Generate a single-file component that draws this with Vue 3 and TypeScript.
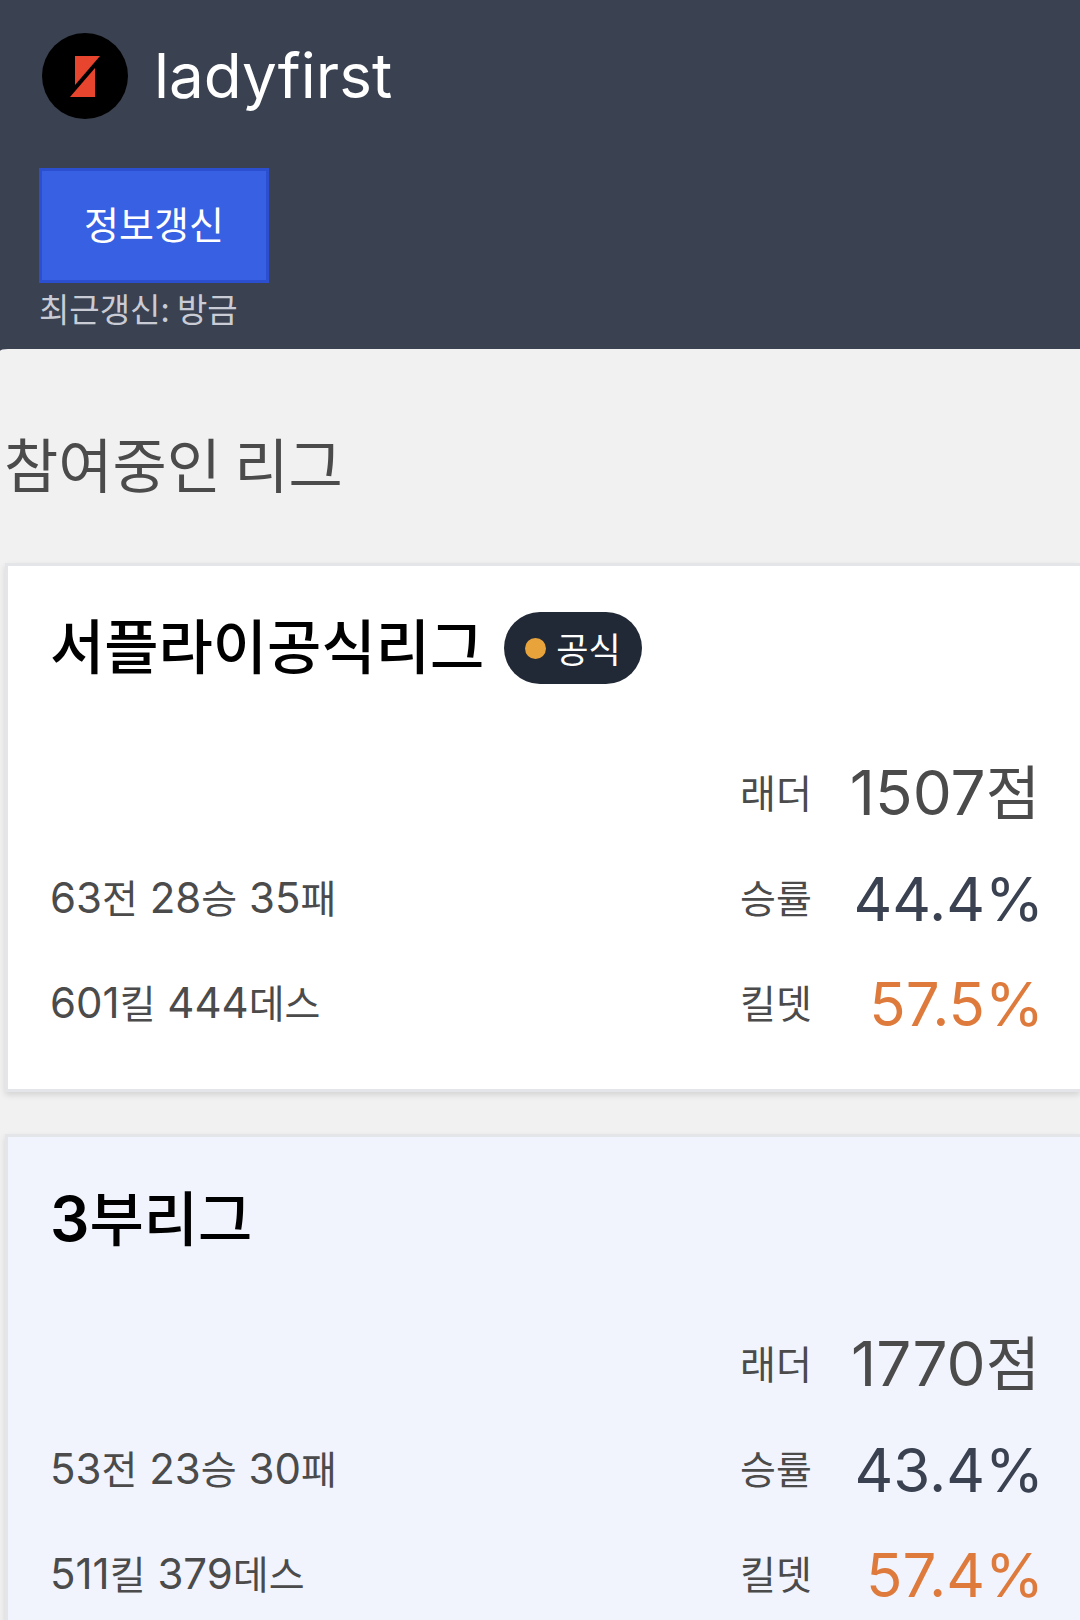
<script setup lang="ts">
interface Segment {
  num: string
  unit: string
}

interface StatRow {
  record: Segment[]
  label: string
  value: string
  unit?: string
  tone: 'plain' | 'navy' | 'orange'
}

interface League {
  name: string
  prefix?: string
  official: boolean
  rows: StatRow[]
}

const leagues: League[] = [
  {
    name: '서플라이공식리그',
    official: true,
    rows: [
      { record: [], label: '래더', value: '1507', unit: '점', tone: 'plain' },
      {
        record: [
          { num: '63', unit: '전' },
          { num: '28', unit: '승' },
          { num: '35', unit: '패' },
        ],
        label: '승률',
        value: '44.4%',
        tone: 'navy',
      },
      {
        record: [
          { num: '601', unit: '킬' },
          { num: '444', unit: '데스' },
        ],
        label: '킬뎃',
        value: '57.5%',
        tone: 'orange',
      },
    ],
  },
  {
    prefix: '3',
    name: '부리그',
    official: false,
    rows: [
      { record: [], label: '래더', value: '1770', unit: '점', tone: 'plain' },
      {
        record: [
          { num: '53', unit: '전' },
          { num: '23', unit: '승' },
          { num: '30', unit: '패' },
        ],
        label: '승률',
        value: '43.4%',
        tone: 'navy',
      },
      {
        record: [
          { num: '511', unit: '킬' },
          { num: '379', unit: '데스' },
        ],
        label: '킬뎃',
        value: '57.4%',
        tone: 'orange',
      },
    ],
  },
]
</script>

<template>
  <div class="page">
    <header class="profile">
      <div class="identity">
        <svg class="avatar" viewBox="0 0 86 86" aria-hidden="true">
          <circle cx="43" cy="43" r="43" fill="#000" />
          <path d="M33 23H58L33 52Z" fill="#e8452f" />
          <path d="M53 35V64H28Z" fill="#e8452f" />
        </svg>
        <h1 class="username">ladyfirst</h1>
      </div>
      <button class="refresh" type="button">정보갱신</button>
      <p class="updated">최근갱신: 방금</p>
    </header>

    <main class="content">
      <h2 class="section-title">참여중인 리그</h2>

      <section
        v-for="league in leagues"
        :key="league.name"
        class="card"
        :class="{ tinted: !league.official }"
      >
        <div class="card-head">
          <h3 class="league-name"><span v-if="league.prefix" class="big">{{ league.prefix }}</span>{{ league.name }}</h3>
          <span v-if="league.official" class="badge"><i class="dot"></i>공식</span>
        </div>
        <div v-for="row in league.rows" :key="row.label" class="row">
          <p class="record">
            <template v-for="(seg, i) in row.record" :key="i">{{ i > 0 ? ' ' : '' }}{{ seg.num }}<span class="unit">{{ seg.unit }}</span></template>
          </p>
          <span class="label">{{ row.label }}</span>
          <span class="value" :class="[row.tone, { percent: !row.unit }]">{{ row.value }}<span v-if="row.unit" class="value-unit">{{ row.unit }}</span></span>
        </div>
      </section>
    </main>
  </div>
</template>

<style>
body {
  margin: 0;
  background: #f1f1f1;
}
</style>

<style scoped>
.page {
  height: 100vh;
  overflow: hidden;
  background: #3a4150;
  color: #4b4b4b;
  font-family: Inter, 'Noto Sans CJK KR', sans-serif;
}

h1,
h2,
h3,
p {
  margin: 0;
  font-weight: 400;
}

.profile {
  padding: 33px 39px 16px;
}

.identity {
  display: flex;
  align-items: center;
  gap: 26px;
  height: 86px;
  margin: 0 0 49px 3px;
}

.avatar {
  width: 86px;
  height: 86px;
}

.username {
  color: #fff;
  font-size: 62px;
  line-height: 86px;
}

.refresh {
  display: block;
  box-sizing: border-box;
  height: 115px;
  padding: 0 42px 6px;
  border: 3px solid #2c4fd0;
  background: #3760e3;
  color: #fff;
  font: 38px/48px 'Noto Sans CJK KR', sans-serif;
}

.updated {
  color: #c9ccd4;
  font: 33px/50px 'Noto Sans CJK KR', sans-serif;
}

.content {
  min-height: 100%;
  border-top-left-radius: 8px 2px;
  background: #f1f1f1;
}

.section-title {
  padding: 70px 4px 56px;
  font-family: 'Noto Sans CJK KR', sans-serif;
  font-size: 59px;
  line-height: 88px;
}

.card {
  margin: 0 0 42px 5px;
  padding: 40px 40px 33px 42px;
  border: 3px solid #e4e5e9;
  border-right: 0;
  background: #fff;
  box-shadow: 0 3px 6px rgba(0, 0, 0, 0.12);
}

.card.tinted {
  background: #f1f4fd;
}

.card-head {
  display: flex;
  align-items: center;
  gap: 20px;
  height: 84px;
  margin-bottom: 51px;
}

.league-name {
  color: #000;
  font-size: 59px;
  font-weight: 500;
  line-height: 84px;
}

.big {
  font-size: 62px;
  font-weight: 600;
}

.badge {
  display: flex;
  align-items: center;
  gap: 10px;
  height: 72px;
  padding: 0 21px;
  border-radius: 36px;
  background: #212936;
  color: #fff;
  font: 35px/72px 'Noto Sans CJK KR', sans-serif;
}

.dot {
  width: 21px;
  height: 21px;
  border-radius: 50%;
  background: #e8a33b;
}

.row {
  display: grid;
  grid-template-columns: 1fr 80px 220px;
  align-items: center;
  height: 105px;
}

.record {
  font-size: 42px;
  line-height: 60px;
}

.unit,
.label {
  font-size: 39px;
}

.label {
  padding-bottom: 6px;
}

.value {
  font-size: 62px;
  line-height: 90px;
  text-align: right;
  white-space: nowrap;
}

.percent {
  margin-right: -4px;
  font-size: 60px;
}

.value-unit {
  font-size: 59px;
}

.navy {
  color: #3a4150;
}

.orange {
  color: #de7a3c;
}
</style>
